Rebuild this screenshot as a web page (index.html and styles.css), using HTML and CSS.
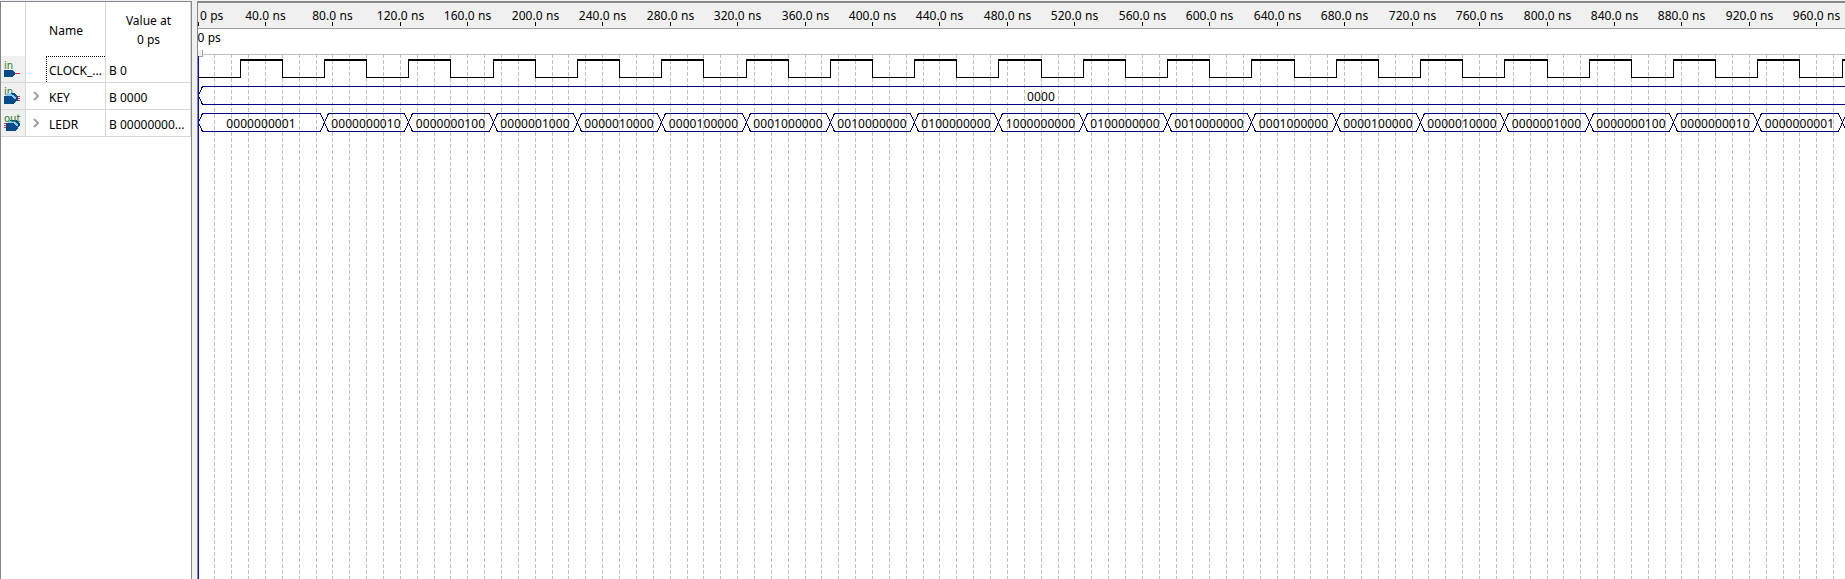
FILE: index.html
```
<!DOCTYPE html>
<html lang="en">
<head>
<meta charset="utf-8">
<title>Waveform viewer</title>
<link rel="stylesheet" href="styles.css">
</head>
<body>
<div class="app">
  <section class="signals">
    <div class="row head">
      <div class="cell icon"></div>
      <div class="cell name">Name</div>
      <div class="cell value">Value at<br>0 ps</div>
    </div>
    <div class="row">
      <div class="cell icon"><svg width="24" height="26" shape-rendering="crispEdges"><text x="3" y="13" class="port">in</text><path d="M3 14h8l4 3v1l-4 3H3z" fill="#004b88"/><path d="M14 17.500h5" stroke="#e8242c"/></svg></div>
      <div class="cell name selected"><span>CLOCK_...</span></div>
      <div class="cell value">B 0</div>
    </div>
    <div class="row">
      <div class="cell icon"><svg width="24" height="26" shape-rendering="crispEdges"><text x="3" y="12" class="port">in</text><path d="M6 10h7l4 4v4h-3l-3-5H5z" fill="#8ccaf4"/><path d="M16 13.500h3M16 15.500h3M16 17.500h3" stroke="#e8242c"/><path d="M3 13h8l4 3v2l-3 3H3z" fill="#004b88"/><path d="M9 10h4l4 4v4h-2v-3l-3-3z" fill="#004b88"/><path d="M7 11h4l3 4v1h-1l-3-3H6z" fill="#8ccaf4"/></svg></div>
      <div class="cell name"><svg class="arrow" width="6" height="10"><path d="M1 1l4 4-4 4"/></svg><span>KEY</span></div>
      <div class="cell value">B 0000</div>
    </div>
    <div class="row">
      <div class="cell icon"><svg width="24" height="26" shape-rendering="crispEdges"><path d="M3 13.500h4M3 15.500h4M3 17.500h4" stroke="#e8242c"/><path d="M5 13h8l4 3v2l-3 3H5z" fill="#004b88"/><path d="M9 10h6l4 4v1l-3 3h-2z" fill="#004b88"/><path d="M7 11h7l3 4v1h-2l-3-3H7z" fill="#8ccaf4"/><text x="3" y="12" class="port">out</text></svg></div>
      <div class="cell name"><svg class="arrow" width="6" height="10"><path d="M1 1l4 4-4 4"/></svg><span>LEDR</span></div>
      <div class="cell value">B 00000000...</div>
    </div>
  </section>
  <div class="splitter"></div>
  <section class="waves">
    <svg id="plot" width="1648" height="578" viewBox="197 1 1648 578"></svg>
  </section>
</div>
<script src="plot.js"></script>
</body>
</html>
```

FILE: styles.css
```
* { box-sizing: border-box; }
body {
  margin: 0;
  background: #f0f0f0;
  font: 12px/19px "Noto Sans", sans-serif;
  color: #000;
  overflow: hidden;
}
.app { display: flex; height: 579px; padding-top: 1px; }
.signals {
  width: 192px;
  background: #fff;
  border: solid #828790;
  border-width: 1px 1px 0 1px;
}
.row {
  display: grid;
  grid-template-columns: 25px 80px 85px;
  height: 27px;
  border-bottom: 1px solid #d8d8d8;
}
.row.head { height: 54px; border-bottom: 0; }
.cell {
  display: flex;
  align-items: center;
  border-right: 1px solid #d8d8d8;
  white-space: nowrap;
  overflow: hidden;
}
.icon { background: #f0f0f0; }
.name { padding: 2px 0 0 7px; }
.value { padding: 2px 0 0 3px; }
.name span { margin-left: 10px; }
.name.selected span { margin-left: 16px; }
.head .icon { background: #fff; }
.head .name { padding: 3px 0 0 1px; justify-content: center; }
.head .value { padding: 2px 0 0 1px; justify-content: center; text-align: center; }
.name.selected { position: relative; }
.name.selected::before {
  content: "";
  position: absolute;
  inset: 0 0 0 20px;
  border: dotted #000;
  border-width: 1px 0 0 1px;
}
.arrow { margin-top: -2px; }
.arrow path { fill: none; stroke: #a0a0a0; stroke-width: 2; }
.port { font: 10px "DejaVu Sans", sans-serif; fill: #2c7a2c; }
.splitter { width: 5px; background: #f0f0f0; }
.waves { width: 1648px; background: #fff; }
#plot { display: block; shape-rendering: crispEdges; }
#plot text { font: 12px "Noto Sans", sans-serif; letter-spacing: 0.08px; fill: #000; }
.mid { text-anchor: middle; }
.grid { stroke: #c0c0c0; stroke-dasharray: 4 2; }
.tick { stroke: #000; }
.bus { fill: none; stroke: #000080; }
```

FILE: plot.js
```
const ORIGIN = 198, SCALE = 1.6863, LAST = 990;
const xAt = ns => Math.floor(ORIGIN + ns * SCALE);
const parts = [];
const rect = (x, y, w, h, fill) => parts.push(`<rect x="${x}" y="${y}" width="${w}" height="${h}" fill="${fill}"/>`);
const label = (x, y, s, cls = "mid") => parts.push(`<text class="${cls}" x="${x}" y="${y}">${s}</text>`);

// Frame and time ruler
rect(197, 3, 1648, 25, "#f0f0f0");
rect(197, 1, 1648, 2, "#848888");
rect(197, 28, 1648, 1, "#a0a0a0");
rect(197, 54, 1648, 1, "#c0c0c0");
for (let t = 10; t < LAST; t += 10) {
  const x = xAt(t) + 0.5;
  parts.push(`<path class="grid" d="M${x} 54V579"/>`);
}
for (let t = 0; t < LAST; t += 40) {
  const x = xAt(t);
  parts.push(`<path class="tick" d="M${x + 0.5} 22V26"/>`);
  if (t) label(x + 0.5, 20, t.toFixed(1) + " ns");
}
label(200, 20, "0 ps", "left");
label(197.5, 42, "0 ps", "left");

// Clock: 50 ns period, rising at 25 ns
for (let t = 0; t < LAST; t += 50) {
  const a = xAt(t), b = xAt(t + 25), c = xAt(t + 50);
  rect(a, 77, b - a, 1, "#000");
  rect(b, 59, 1, 19, "#000");
  rect(b, 59, c - b + 1, 2, "#000");
  rect(c, 59, 1, 19, "#000");
}

// Buses
const bus = (a, b, top, text) => {
  const m = top + 9;
  const l = a + 0.5, r = b + 0.5;
  parts.push(`<path class="bus" d="M${l} ${m + 0.5}L${l + 4} ${top + 0.5}H${r - 4}L${r} ${m + 0.5}L${r - 4} ${top + 18.5}H${l + 4}Z"/>`);
  label((a + b) / 2, top + 15, text);
};
bus(198, xAt(1000), 86, "0000");
const positions = [0, 1, 2, 3, 4, 5, 6, 7, 8, 9, 8, 7, 6, 5, 4, 3, 2, 1, 0, 1];
positions.forEach((p, i) => {
  const start = i ? 25 + i * 50 : 0;
  bus(xAt(start), xAt(75 + i * 50), 113, i < 19 ? "0".repeat(9 - p) + "1" + "0".repeat(p) : "");
});

// Time cursor
rect(198, 50, 5, 7, "#a0a0a0");
rect(198, 50, 4, 6, "#f0f0f0");
rect(197, 1, 1, 578, "#828790");
rect(198, 56, 1, 523, "#0000ff");
document.getElementById("plot").innerHTML = parts.join("");
```
